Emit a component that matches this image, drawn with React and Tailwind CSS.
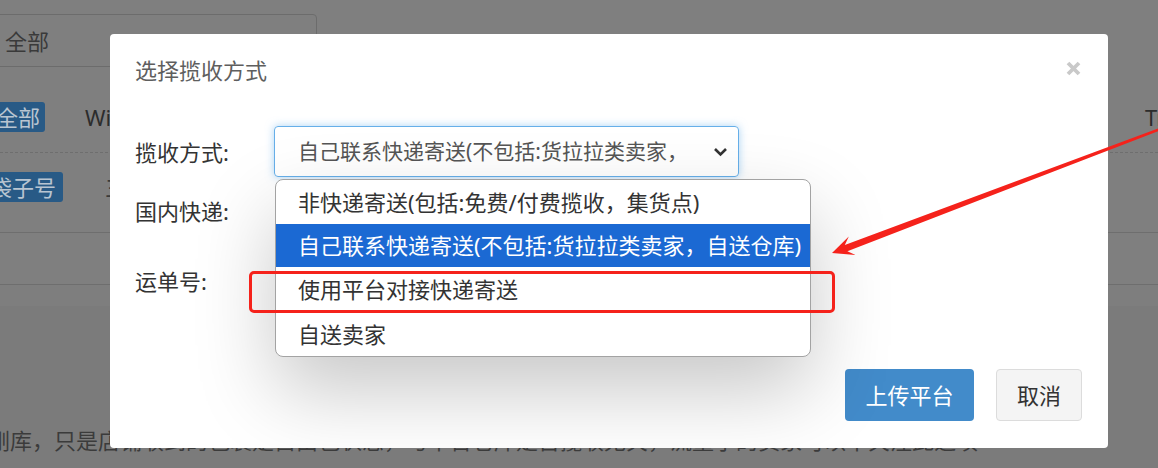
export default function App() {
  return (
    <div className="relative w-[1158px] h-[468px] overflow-hidden bg-[#7f7f7f] font-['Noto_Sans','Noto_Sans_CJK_SC',sans-serif] leading-none">
      {/* page behind the overlay */}
      <div className="flex flex-col">
        <div className="h-[14px]" />
        <div className="-ml-[10px] w-[327px] h-[53px] border border-[#6c6c6c] rounded-r-[4px] flex items-center pl-[14px] text-[22px] text-[#3a3a3a]">
          全部
        </div>
        <div className="h-[86px] pt-[35px] border-b border-dashed border-[#6e6e6e]">
          <div className="flex items-center h-[30px] whitespace-nowrap">
            <span className="shrink-0 -ml-[9px] h-[30px] px-[5px] flex items-center rounded-[3px] bg-[#285a86] text-[22px] text-[#b9c5d1]">全部</span>
            <span className="shrink-0 ml-[40px] w-[1060px] text-[22px] text-[#2c2c2c]">Wish</span>
            <span className="shrink-0 text-[22px] text-[#2c2c2c]">Tracking</span>
          </div>
        </div>
        <div className="h-[80px] pt-[19px] border-b border-[#6e6e6e]">
          <div className="flex items-center h-[30px] whitespace-nowrap">
            <span className="shrink-0 -ml-[16px] h-[30px] pl-[6px] pr-[7px] flex items-center rounded-[3px] bg-[#285a86] text-[22px] text-[#b9c5d1]">袋子号</span>
            <span className="shrink-0 ml-[42px] text-[22px] text-[#3a3a3a]">三</span>
          </div>
        </div>
        <div className="h-[52px] border-b border-[#6e6e6e]" />
        <div className="h-[21px] bg-[#7e7e7e]" />
        <div className="h-[163px] bg-[#7b7b7b] pt-[123px]">
          <div className="-ml-[12px] text-[22px] text-[#3b3b3b] whitespace-nowrap">
            刚库，只是店铺收到的包裹是自由包状态，与平台仓库是否揽收无关，流量小的卖家可以不关注此选项
          </div>
        </div>
      </div>

      {/* dialog */}
      <div className="absolute left-[110px] top-[34px] w-[998px] h-[414px] bg-white rounded-[4px] overflow-hidden flex flex-col">
        <div className="flex items-center justify-between pt-[21px] pl-[25px] pr-[27px] h-[51px]">
          <span className="text-[22px] leading-[30px] text-[#5e5e5e]">选择揽收方式</span>
          <svg width="15" height="15" viewBox="0 0 15 15" className="mb-[3px]">
            <path d="M2 2 L13 13 M13 2 L2 13" stroke="#c9c9c9" strokeWidth="3.8" strokeLinecap="butt" />
          </svg>
        </div>

        <div className="flex flex-col pl-[25px] mt-[41px]">
          <div className="flex items-center h-[51px]">
            <span className="w-[139px] text-[22px] text-[#333]">揽收方式:</span>
            <div className="w-[465px] h-[51px] border border-[#66afe9] rounded-[4px] shadow-[0_0_8px_rgba(102,175,233,0.55)] flex items-center justify-between pl-[23px] pr-[10px]">
              <span className="text-[21px] text-[#555] whitespace-nowrap">自己联系快递寄送(不包括:货拉拉类卖家，</span>
              <svg width="15" height="10" viewBox="0 0 15 10" className="shrink-0">
                <path d="M2 2 L7.5 7.5 L13 2" fill="none" stroke="#333" strokeWidth="2.6" />
              </svg>
            </div>
          </div>
          <div className="flex items-center h-[51px] mt-[8px]">
            <span className="w-[139px] text-[22px] text-[#333]">国内快递:</span>
          </div>
          <div className="flex items-center h-[51px] mt-[19px]">
            <span className="w-[139px] text-[22px] text-[#333]">运单号:</span>
          </div>
        </div>

        <div className="mt-auto flex justify-end gap-[22px] pr-[26px] pb-[27px]">
          <button className="w-[129px] h-[52px] rounded-[4px] bg-[#428bca] text-white text-[22px]">上传平台</button>
          <button className="w-[86px] h-[52px] rounded-[4px] bg-[#f4f4f4] border border-[#dcdcdc] text-[#333] text-[22px]">取消</button>
        </div>

        {/* open dropdown list */}
        <div className="absolute left-[165px] top-[145px] w-[536px] h-[178px] bg-white border border-[#a3a3a3] rounded-[8px] overflow-hidden shadow-[0_34px_80px_rgba(0,0,0,0.22)] flex flex-col">
          <div className="h-[44px] flex items-center pl-[22px] text-[22px] text-[#333] whitespace-nowrap">非快递寄送(包括:免费/付费揽收，集货点)</div>
          <div className="h-[44px] flex items-center pl-[22px] text-[22px] text-white bg-[#1b69d3] whitespace-nowrap">自己联系快递寄送(不包括:货拉拉类卖家，自送仓库)</div>
          <div className="h-[45px] flex items-center pl-[22px] text-[22px] text-[#333] whitespace-nowrap">使用平台对接快递寄送</div>
          <div className="h-[45px] flex items-center pl-[22px] text-[22px] text-[#333] whitespace-nowrap">自送卖家</div>
        </div>
      </div>

      {/* red annotation box */}
      <div className="absolute left-[249px] top-[271px] w-[586px] h-[42px] border-[3px] border-[#f5221b] rounded-[5px]" />

      {/* red annotation arrow */}
      <svg className="absolute left-0 top-0" width="1158" height="468" viewBox="0 0 1158 468">
        <polygon
          points="832,253 855.5,255 847.4,251.2 1160.4,130.2 1159.6,127.8 844.8,245 848.8,236.5"
          fill="#f5221b"
        />
      </svg>
    </div>
  );
}
